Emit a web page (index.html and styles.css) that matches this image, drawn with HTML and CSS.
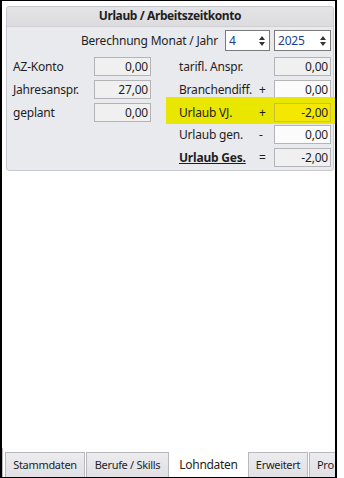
FILE: index.html
```html
<!DOCTYPE html>
<html lang="de">
<head>
    <meta charset="UTF-8">
    <title>Lohndaten</title>
    <link rel="stylesheet" href="styles.css">
</head>
<body>
    <div class="window">
        <section class="panel">
            <header class="panel-head">Urlaub / Arbeitszeitkonto</header>
            <div class="period">
                <span>Berechnung Monat / Jahr</span>
                <div class="spin month">4<span class="arrows"><i class="up"></i><i class="down"></i></span></div>
                <div class="spin year">2025<span class="arrows"><i class="up"></i><i class="down"></i></span></div>
            </div>
            <div class="cols">
                <div class="col left">
                    <div class="row"><label>AZ-Konto</label><div class="box ro">0,00</div></div>
                    <div class="row"><label>Jahresanspr.</label><div class="box ro">27,00</div></div>
                    <div class="row"><label>geplant</label><div class="box ro">0,00</div></div>
                </div>
                <div class="col right">
                    <div class="row"><label>tarifl. Anspr.</label><span class="sign"></span><div class="box ro">0,00</div></div>
                    <div class="row"><label>Branchendiff.</label><span class="sign">+</span><div class="box">0,00</div></div>
                    <div class="row mark"><label>Urlaub VJ.</label><span class="sign">+</span><div class="box yellow">-2,00</div></div>
                    <div class="row"><label>Urlaub gen.</label><span class="sign">-</span><div class="box">0,00</div></div>
                    <div class="row"><label class="total">Urlaub Ges.</label><span class="sign">=</span><div class="box ro">-2,00</div></div>
                </div>
            </div>
        </section>
        <nav class="tabs">
            <span class="tab t1">Stammdaten</span>
            <span class="tab t2">Berufe / Skills</span>
            <span class="tab t3 active">Lohndaten</span>
            <span class="tab t4">Erweitert</span>
            <span class="tab t5">Pro</span>
        </nav>
    </div>
</body>
</html>
```

FILE: styles.css
```css
body {
    margin: 0;
    background: #fff;
    font-family: 'Noto Sans', 'DejaVu Sans', sans-serif;
    font-size: 12px;
    letter-spacing: -0.2px;
    color: #1e1e1e;
}
.window {
    box-sizing: border-box;
    width: 337px;
    height: 478px;
    border: 1px solid #000;
    border-left-width: 2px;
    border-right-width: 2px;
    display: flex;
    flex-direction: column;
    overflow: hidden;
}
.panel {
    margin: 5px 1px 0 4px;
    height: 165px;
    box-sizing: border-box;
    background: #e9eaee;
    border: 1px solid #c6c7cc;
    border-radius: 3px;
}
.panel-head {
    height: 19px;
    line-height: 18px;
    text-align: center;
    font-weight: bold;
    letter-spacing: -0.4px;
    background: linear-gradient(#e4e4e7, #dcdcdf);
    border-bottom: 1px solid #d0d0d4;
    border-radius: 3px 3px 0 0;
}
.period {
    display: flex;
    align-items: center;
    justify-content: flex-end;
    gap: 4px;
    margin: 3px 2px 0 0;
}
.period > span {
    margin-right: 3px;
}
.spin {
    box-sizing: border-box;
    height: 21px;
    background: #fff;
    border: 1px solid #7a7a7a;
    padding-left: 3px;
    line-height: 19px;
    color: #1a3d8f;
    display: flex;
    justify-content: space-between;
}
.spin.month { width: 45px; }
.spin.year { width: 57px; }
.arrows {
    width: 14px;
    display: flex;
    flex-direction: column;
    align-items: center;
    justify-content: center;
    gap: 2px;
}
.arrows i {
    width: 0;
    height: 0;
    border-left: 3px solid transparent;
    border-right: 3px solid transparent;
}
.arrows .up { border-bottom: 4px solid #333; }
.arrows .down { border-top: 4px solid #333; }
.cols {
    display: flex;
    margin-top: 6px;
}
.col {
    display: flex;
    flex-direction: column;
    gap: 4px;
}
.left {
    width: 143px;
    padding-left: 6px;
}
.right {
    padding-left: 23px;
}
.row {
    display: flex;
    align-items: center;
    height: 19px;
}
.left label {
    width: 81px;
}
.right label {
    width: 80px;
}
.sign {
    width: 15px;
}
.box {
    box-sizing: border-box;
    width: 57px;
    height: 19px;
    line-height: 17px;
    text-align: right;
    padding-right: 2px;
    background: #fbfbfb;
    border: 1px solid #b4b4b8;
}
.box.ro {
    background: #f0f0f1;
}
.row.mark {
    background: #e9e600;
    margin: -6px -6px -3px -13px;
    padding: 6px 6px 3px 13px;
    height: 18px;
}
.box.yellow {
    background: #f4e800;
    border-color: #c9bf3a;
}
.total {
    font-weight: bold;
    text-decoration: underline;
}
.tabs {
    margin-top: auto;
    display: flex;
    align-items: flex-end;
    padding-left: 2px;
    border-left: 1px solid #b9b9bd;
    height: 29px;
    font-size: 11px;
    letter-spacing: -0.3px;
}
.tab {
    box-sizing: border-box;
    flex-shrink: 0;
    height: 25px;
    line-height: 23px;
    text-align: center;
    background: linear-gradient(#ececef, #e1e1e5);
    border: 1px solid #b9b9bd;
    border-bottom: none;
    margin-right: 1px;
    white-space: nowrap;
}
.t1 { width: 80px; }
.t2 { width: 83px; }
.t3 { width: 77px; }
.t4 { width: 60px; }
.t5 { width: 40px; text-align: left; padding-left: 7px; }
.tab.active {
    height: 29px;
    line-height: 31px;
    background: #fff;
    border-color: #fff;
    font-size: 12px;
}
```
